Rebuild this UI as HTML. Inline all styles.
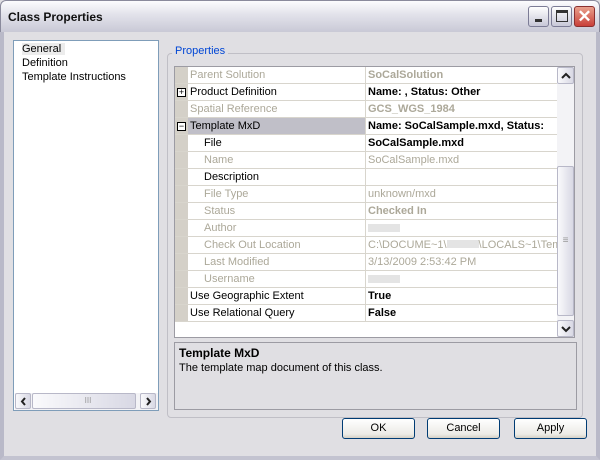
<!DOCTYPE html>
<html><head><style>
*{box-sizing:border-box;margin:0;padding:0}
body{width:600px;height:460px;overflow:hidden;font-family:"Liberation Sans",Tahoma,sans-serif;font-size:11px;background:#e0dfe3;position:relative}
.abs{position:absolute}
#title{left:0;top:0;width:600px;height:32px;background:linear-gradient(#fcfcfe,#e4e4ec 40%,#c9c9d6);border:1px solid #8a8a9c;border-bottom:none;border-radius:6px 6px 0 0}
#title span{position:absolute;left:7px;top:9px;font-weight:bold;font-size:12px;color:#111}
.tb{top:6px;width:21px;height:21px;border:1px solid #7c7c96;border-radius:3px;background:linear-gradient(#fefefe,#c8c8d8)}
#frame{left:0;top:32px;width:600px;height:428px;border:4px solid #c3c3d0;border-top:none;border-left-color:#b9b9c8;border-right-color:#b9b9c8}
#list{left:13px;top:40px;width:146px;height:371px;background:#fff;border:1px solid #7f9db9}
#list div{padding-left:8px;line-height:14px;font-size:11px}
.grp{left:167px;top:53px;width:416px;height:365px;border:1px solid #c0bfc6;border-radius:4px}
#grid{left:174px;top:66px;width:401px;height:272px;background:#fff;border:1px solid #9c9ba3}
.row{position:absolute;left:0;width:382px;height:17px;border-bottom:1px solid #d8d5cd}
.row .n{position:absolute;left:13px;width:178px;height:16px;border-right:1px solid #d8d5cd;padding-left:2px;line-height:16px}
.row .v{position:absolute;left:191px;width:191px;height:16px;padding-left:2px;line-height:16px;white-space:nowrap;overflow:hidden}
.g{color:#aca899}.b{font-weight:bold}
.gut{position:absolute;left:0;top:0;width:13px;height:255px;background:#d4d0c8}
.pm{position:absolute;left:2px;top:4px;width:9px;height:9px;border:1px solid #000;background:#fff;font-size:9px;line-height:7px;text-align:center}
#desc{left:174px;top:342px;width:403px;height:68px;border:1px solid #9c9ba3;background:#e0dfe3;padding:3px 4px}
.btn{top:418px;width:73px;height:21px;border:1px solid #003c74;border-radius:3px;background:linear-gradient(#fff,#ecebe6 80%,#d6d0c5);text-align:center;line-height:19px;font-size:11px}
.sb{background:#f3f3f6}
.sbt{width:16px;height:16px;border:1px solid #b8b8c8;border-radius:2px;background:linear-gradient(90deg,#fafafc,#d8d8e4);font-size:10px;color:#333;text-align:center;line-height:14px}
.sbt svg{position:absolute;left:3px;top:3px}
</style></head><body>
<div id="frame" class="abs"></div>
<div id="title" class="abs"><span>Class Properties</span></div>
<div class="abs tb" style="left:528px"><div class="abs" style="left:6px;top:12px;width:7px;height:3px;background:#333"></div></div>
<div class="abs tb" style="left:551px"><div class="abs" style="left:4px;top:3px;width:12px;height:12px;border:1px solid #333;border-top-width:3px"></div></div>
<div class="abs tb" style="left:574px;background:linear-gradient(#e9a08c,#c9403a);border-color:#8a3030;color:#fff;font-size:17px;text-align:center;line-height:19px;font-weight:bold">✕</div>

<div id="list" class="abs">
<div style="margin-top:1px"><span style="background:#ececec;padding-right:4px">General</span></div>
<div>Definition</div><div>Template Instructions</div>
<div class="abs sb" style="left:1px;top:352px;width:143px;height:17px">
 <div class="abs sbt" style="left:0;top:0"><svg width="9" height="9"><path d="M6 1L3 4.5L6 8" stroke="#222" stroke-width="2" fill="none"/></svg></div>
 <div class="abs sbt" style="left:17px;top:0;width:104px;font-size:8px;color:#999">III</div>
 <div class="abs sbt" style="left:125px;top:0"><svg width="9" height="9"><path d="M3 1L6 4.5L3 8" stroke="#222" stroke-width="2" fill="none"/></svg></div>
</div>
</div>

<div class="abs grp"></div>
<div class="abs" style="left:172px;top:45px;background:#e0dfe3;color:#0046d5;padding:0 3px">Properties</div>

<div id="grid" class="abs">
<div class="gut"></div>
<div class="row" style="top:0"><div class="n g">Parent Solution</div><div class="v g b">SoCalSolution</div></div>
<div class="row" style="top:17px"><div class="pm">+</div><div class="n">Product Definition</div><div class="v b">Name: , Status: Other</div></div>
<div class="row" style="top:34px"><div class="n g">Spatial Reference</div><div class="v g b">GCS_WGS_1984</div></div>
<div class="row" style="top:51px"><div class="pm">−</div><div class="n" style="background:#c0bfc8">Template MxD</div><div class="v b">Name: SoCalSample.mxd, Status:</div></div>
<div class="row" style="top:68px"><div class="n" style="padding-left:16px">File</div><div class="v b">SoCalSample.mxd</div></div>
<div class="row" style="top:85px"><div class="n g" style="padding-left:16px">Name</div><div class="v g">SoCalSample.mxd</div></div>
<div class="row" style="top:102px"><div class="n" style="padding-left:16px">Description</div><div class="v"></div></div>
<div class="row" style="top:119px"><div class="n g" style="padding-left:16px">File Type</div><div class="v g">unknown/mxd</div></div>
<div class="row" style="top:136px"><div class="n g" style="padding-left:16px">Status</div><div class="v g b">Checked In</div></div>
<div class="row" style="top:153px"><div class="n g" style="padding-left:16px">Author</div><div class="v"><span style="display:inline-block;width:32px;height:8px;background:#e4e4e4;margin-top:4px"></span></div></div>
<div class="row" style="top:170px"><div class="n g" style="padding-left:16px">Check Out Location</div><div class="v g">C:\DOCUME~1\<span style="display:inline-block;width:32px;height:8px;background:#e4e4e4"></span>\LOCALS~1\Temp</div></div>
<div class="row" style="top:187px"><div class="n g" style="padding-left:16px">Last Modified</div><div class="v g">3/13/2009 2:53:42 PM</div></div>
<div class="row" style="top:204px"><div class="n g" style="padding-left:16px">Username</div><div class="v"><span style="display:inline-block;width:32px;height:8px;background:#e4e4e4;margin-top:4px"></span></div></div>
<div class="row" style="top:221px"><div class="n">Use Geographic Extent</div><div class="v b">True</div></div>
<div class="row" style="top:238px"><div class="n">Use Relational Query</div><div class="v b">False</div></div>
<div class="abs sb" style="left:382px;top:0;width:17px;height:270px">
 <div class="abs sbt" style="left:0;top:0;width:17px;height:17px"><svg width="10" height="10"><path d="M1 7L5 3L9 7" stroke="#222" stroke-width="2" fill="none"/></svg></div>
 <div class="abs sbt" style="left:0;top:99px;width:17px;height:150px;line-height:148px;color:#999">≡</div>
 <div class="abs sbt" style="left:0;top:253px;width:17px;height:17px"><svg width="10" height="10"><path d="M1 3L5 7L9 3" stroke="#222" stroke-width="2" fill="none"/></svg></div>
</div>
</div>

<div id="desc" class="abs"><div class="b" style="font-size:12px">Template MxD</div><div style="margin-top:2px">The template map document of this class.</div></div>

<div class="abs btn" style="left:342px">OK</div>
<div class="abs btn" style="left:427px">Cancel</div>
<div class="abs btn" style="left:514px">Apply</div>
</body></html>
